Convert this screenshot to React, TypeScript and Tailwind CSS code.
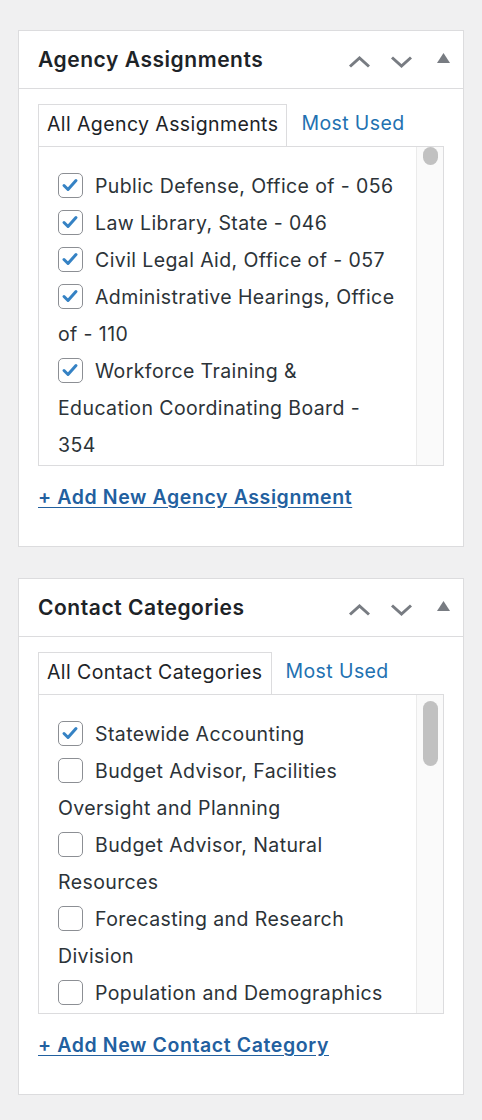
import React from "react";

const FONT = { fontFamily: 'Inter, "Liberation Sans", Arial, sans-serif' };

function Checkbox({ checked }: { checked: boolean }) {
  return (
    <span className="inline-block align-middle relative -top-[2px] w-[25px] h-[25px] mr-[12px] rounded-[5px] border-[1.5px] border-[#8c8f94] bg-white">
      {checked && (
        <svg width="22" height="22" viewBox="0 0 22 22" className="absolute left-[0px] top-[0px]">
          <path d="M5 11.5 L9 15.5 L17 6.5" fill="none" stroke="#3582c4" strokeWidth="3" strokeLinecap="round" strokeLinejoin="round" />
        </svg>
      )}
    </span>
  );
}

function HeaderIcons() {
  return (
    <div className="flex items-start pr-[13px]">
      <svg width="23" height="12" viewBox="0 0 23 12" className="mt-[5px]">
        <path d="M2 10.5 L11.5 2 L21 10.5" fill="none" stroke="#787c82" strokeWidth="3" />
      </svg>
      <svg width="23" height="12" viewBox="0 0 23 12" className="ml-[19px] mt-[5px]">
        <path d="M2 1.5 L11.5 10 L21 1.5" fill="none" stroke="#787c82" strokeWidth="3" />
      </svg>
      <svg width="13" height="10" viewBox="0 0 13 10" className="ml-[24px] mt-[2px]">
        <path d="M0 10 L6.5 0 L13 10 Z" fill="#787c82" />
      </svg>
    </div>
  );
}

type Item = { checked: boolean; lines: string[] };

function MetaBox({
  title,
  tabLabel,
  items,
  linkLabel,
  thumbTop,
  thumbHeight,
  className,
}: {
  title: string;
  tabLabel: string;
  items: Item[];
  linkLabel: string;
  thumbTop: number;
  thumbHeight: number;
  className?: string;
}) {
  return (
    <div className={"bg-white border border-[#dcdcde] " + (className ?? "")}>
      <div className="h-[58px] border-b border-[#dcdcde] flex items-center justify-between pl-[19px]">
        <h2 className="text-[21px] font-semibold text-[#1d2327] leading-none tracking-[0.55px]">{title}</h2>
        <HeaderIcons />
      </div>
      <div className="px-[19px] pt-[15px] pb-[36px]">
        <div className="flex h-[42px]">
          <div className="border border-b-0 border-[#dcdcde] px-[8px] pt-[6px] text-[19.5px] leading-[26px] tracking-[0.4px] text-[#1d2327]">
            {tabLabel}
          </div>
          <div className="ml-[14px] pt-[6px] text-[19.5px] leading-[26px] tracking-[0.4px] text-[#2271b1]">Most Used</div>
        </div>
        <div className="h-[320px] border border-[#dcdcde] flex overflow-hidden">
          <ul className="flex-1 pl-[19px] pt-[21px] whitespace-nowrap text-[19.5px] leading-[37px] tracking-[0.4px] text-[#2c3338] overflow-hidden">
            {items.map((it, i) => (
              <li key={i}>
                <Checkbox checked={it.checked} />
                {it.lines.map((l, j) => (
                  <React.Fragment key={j}>
                    {j > 0 && <br />}
                    {l}
                  </React.Fragment>
                ))}
              </li>
            ))}
          </ul>
          <div className="w-[27px] bg-[#fafafa] border-l border-[#ebebeb] flex flex-col items-center">
            <div
              className="w-[15px] rounded-full bg-[#c1c1c1]"
              style={{ marginTop: thumbTop, height: thumbHeight }}
            />
          </div>
        </div>
        <a className="block mt-[18px] text-[19.5px] leading-[26px] font-semibold underline underline-offset-[3px] tracking-[0.6px] text-[#22609f]">
          {linkLabel}
        </a>
      </div>
    </div>
  );
}

export default function App() {
  return (
    <div className="min-h-[1120px] w-[482px] bg-[#f0f0f1] pt-[30px] px-[18px]" style={FONT}>
      <MetaBox
        title="Agency Assignments"
        tabLabel="All Agency Assignments"
        linkLabel="+ Add New Agency Assignment"
        thumbTop={0}
        thumbHeight={18}
        items={[
          { checked: true, lines: ["Public Defense, Office of - 056"] },
          { checked: true, lines: ["Law Library, State - 046"] },
          { checked: true, lines: ["Civil Legal Aid, Office of - 057"] },
          { checked: true, lines: ["Administrative Hearings, Office", "of - 110"] },
          { checked: true, lines: ["Workforce Training &", "Education Coordinating Board -", "354"] },
        ]}
      />
      <MetaBox
        className="mt-[31px]"
        title="Contact Categories"
        tabLabel="All Contact Categories"
        linkLabel="+ Add New Contact Category"
        thumbTop={6}
        thumbHeight={65}
        items={[
          { checked: true, lines: ["Statewide Accounting"] },
          { checked: false, lines: ["Budget Advisor, Facilities", "Oversight and Planning"] },
          { checked: false, lines: ["Budget Advisor, Natural", "Resources"] },
          { checked: false, lines: ["Forecasting and Research", "Division"] },
          { checked: false, lines: ["Population and Demographics"] },
        ]}
      />
    </div>
  );
}
